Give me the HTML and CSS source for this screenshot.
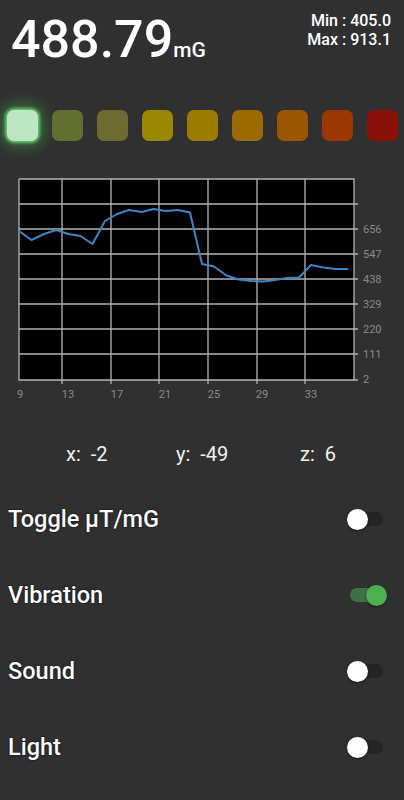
FILE: index.html
```html
<html>
    <head>
        <meta charset="UTF-8">
        <link rel="stylesheet" href="styles.css">
    </head>
    <body>
        <div id="medidor">
            <div class="cabecera">
                <div class="valor">488.79<span class="unidad">mG</span></div>
                <div class="extremos">
                    <div>Min : 405.0</div>
                    <div>Max : 913.1</div>
                </div>
            </div>

            <div class="niveles">
                <div class="nivel activo"></div>
                <div class="nivel n2"></div>
                <div class="nivel n3"></div>
                <div class="nivel n4"></div>
                <div class="nivel n5"></div>
                <div class="nivel n6"></div>
                <div class="nivel n7"></div>
                <div class="nivel n8"></div>
                <div class="nivel n9"></div>
            </div>

            <svg class="grafico" width="404" height="230" viewBox="0 170 404 230">
                <rect x="19" y="179" width="335" height="201" fill="#000"/>
                <g stroke="#b4b4b4" stroke-width="1.3" fill="none">
                    <path d="M62 179V384 M111 179V384 M159 179V384 M208 179V384 M257 179V384 M305 179V384"/>
                    <path d="M19 204H358 M19 229H358 M19 254H358 M19 279H358 M19 304H358 M19 329H358 M19 354H358"/>
                    <path d="M19 179H354V380 M19 179V380H358"/>
                </g>
                <polyline fill="none" stroke="#3d86c6" stroke-width="2" stroke-linejoin="round"
                    points="19,231 31.5,240 44,234 56.5,230 68.5,234 80.5,236 92.5,244 105,221 117,214 129,210 141.5,212 153.5,209 165.5,211 178,210 190,212.5 202,264 214,266.5 226.5,275.5 239,279.5 251,281 263,281.5 275,280 287,278 299,277.5 311,265 323.5,267.5 335.5,269 348,269"/>
                <g class="eje" fill="#8a8a8a">
                    <text x="363" y="233">656</text>
                    <text x="363" y="258">547</text>
                    <text x="363" y="283">438</text>
                    <text x="363" y="308">329</text>
                    <text x="363" y="333">220</text>
                    <text x="363" y="358">111</text>
                    <text x="363" y="383">2</text>
                </g>
                <g class="eje" fill="#8a8a8a" text-anchor="middle">
                    <text x="20" y="398">9</text>
                    <text x="68" y="398">13</text>
                    <text x="117" y="398">17</text>
                    <text x="165" y="398">21</text>
                    <text x="214" y="398">25</text>
                    <text x="262" y="398">29</text>
                    <text x="311" y="398">33</text>
                </g>
            </svg>

            <div class="ejes">
                <span>x:&nbsp; -2</span>
                <span>y:&nbsp; -49</span>
                <span>z:&nbsp; 6</span>
            </div>

            <div class="opciones">
                <div class="opcion">
                    <span>Toggle μT/mG</span>
                    <div class="interruptor"><div class="pista"></div><div class="boton"></div></div>
                </div>
                <div class="opcion">
                    <span>Vibration</span>
                    <div class="interruptor encendido"><div class="pista"></div><div class="boton"></div></div>
                </div>
                <div class="opcion">
                    <span>Sound</span>
                    <div class="interruptor"><div class="pista"></div><div class="boton"></div></div>
                </div>
                <div class="opcion">
                    <span>Light</span>
                    <div class="interruptor"><div class="pista"></div><div class="boton"></div></div>
                </div>
            </div>
        </div>
    </body>
</html>
```

FILE: styles.css
```css
html, body {
    margin: 0;
    background-color: #303030;
}
#medidor {
    width: 404px;
    height: 800px;
    font-family: Roboto, "Liberation Sans", sans-serif;
    color: #fff;
    overflow: hidden;
}

.cabecera {
    display: flex;
    justify-content: space-between;
    padding: 8px 13px 0 11px;
    height: 96px;
    box-sizing: border-box;
}
.valor {
    font-size: 52px;
    font-weight: 500;
    line-height: 64px;
}
.unidad {
    font-size: 21px;
}
.extremos {
    font-size: 16px;
    font-weight: 500;
    line-height: 19px;
    text-align: right;
    padding-top: 3px;
}

.niveles {
    display: flex;
    gap: 14px;
    padding: 14px 0 0 7px;
    height: 74px;
    box-sizing: border-box;
}
.nivel {
    width: 31px;
    height: 31px;
    border-radius: 7px;
    flex-shrink: 0;
}
.activo {
    background-color: #bfe6c2;
    box-shadow: 0 0 3px 2px #62c86a, 0 0 14px 6px rgba(70, 200, 80, 0.4);
}
.n2 { background-color: #636f31; }
.n3 { background-color: #6d6b31; }
.n4 { background-color: #9a8800; }
.n5 { background-color: #9b7b00; }
.n6 { background-color: #9b6a00; }
.n7 { background-color: #9c5600; }
.n8 { background-color: #9b3700; }
.n9 { background-color: #8c100a; }

.grafico {
    display: block;
}
.eje {
    font-family: Roboto, sans-serif;
    font-size: 11px;
}

.ejes {
    display: flex;
    padding: 42px 0 0 66px;
    height: 81px;
    box-sizing: border-box;
    font-size: 20px;
    line-height: 24px;
    color: #f0f0f0;
}
.ejes span:nth-child(1) { width: 110px; }
.ejes span:nth-child(2) { width: 124px; }

.opciones {
    padding: 0 20px 0 8px;
}
.opcion {
    display: flex;
    justify-content: space-between;
    align-items: center;
    height: 76px;
    font-size: 23.5px;
    font-weight: 500;
    text-shadow: 0 0 2px #000;
}
.interruptor {
    position: relative;
    width: 37px;
    height: 20px;
}
.pista {
    position: absolute;
    left: 3px;
    top: 3px;
    width: 33px;
    height: 14px;
    border-radius: 7px;
    background-color: #252525;
}
.boton {
    position: absolute;
    left: 0;
    top: 0;
    width: 21px;
    height: 21px;
    border-radius: 50%;
    background-color: #fff;
    box-shadow: 0 1px 2px rgba(0, 0, 0, 0.6);
}
.encendido .pista {
    background-color: #3f7046;
}
.encendido .boton {
    left: 19px;
    background-color: #4caf50;
}
```
